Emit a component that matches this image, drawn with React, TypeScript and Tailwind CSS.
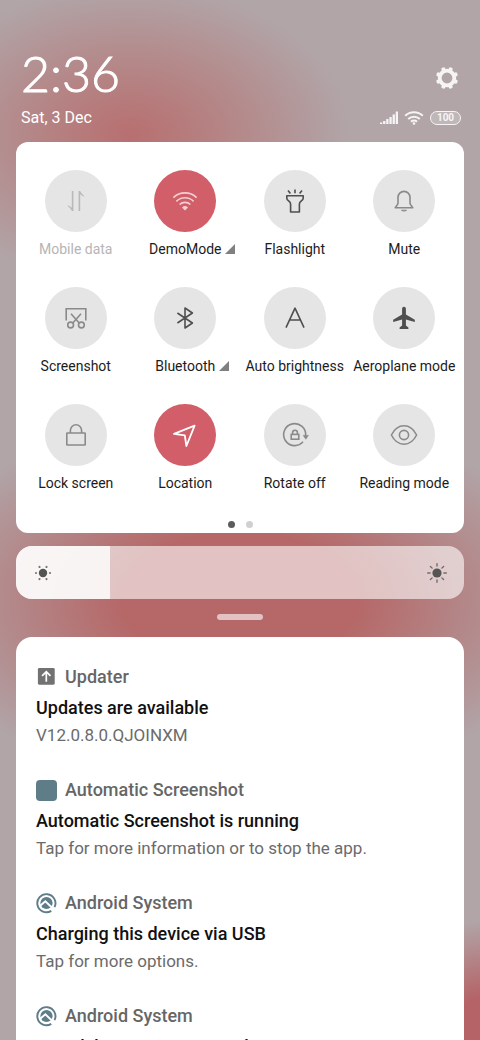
import { useState, type ReactNode } from "react";

type Tone = "faint" | "soft" | "strong" | "active";

interface Tile {
  label: string;
  tone: Tone;
  icon: ReactNode;
  expandable?: boolean;
}

interface Notice {
  app: string;
  title: string;
  body: string;
  icon: ReactNode;
}

const toneClass: Record<Tone, string> = {
  faint: "bg-[#e5e5e5] text-[#b9b9b9]",
  soft: "bg-[#e5e5e5] text-[#8a8a8a]",
  strong: "bg-[#e5e5e5] text-[#4f4f4f]",
  active: "bg-[#d15e69] text-white",
};

function Glyph({ children }: { children: ReactNode }) {
  return (
    <svg
      viewBox="0 0 28 28"
      className="size-7"
      fill="none"
      stroke="currentColor"
      strokeWidth="1.6"
      aria-hidden="true"
    >
      {children}
    </svg>
  );
}

const tiles: Tile[] = [
  {
    label: "Mobile data",
    tone: "faint",
    icon: (
      <Glyph>
        <path d="M10.600 4v20M17.400 24V4" />
        <path d="M10.600 24V21.500L6 18.600zM17.400 4v2.500l4.600 2.900z" fill="currentColor" strokeWidth="0.6" />
      </Glyph>
    ),
  },
  {
    label: "DemoMode",
    tone: "active",
    expandable: true,
    icon: (
      <Glyph>
        <g stroke="#f3cfd2" strokeWidth="1.7">
          <path d="M2.400 10.600a16.600 16.600 0 0 1 23.200 0" />
          <path d="M5.400 14.300a12.200 12.200 0 0 1 17.200 0" />
          <path d="M8.600 17.500a7.800 7.800 0 0 1 10.800 0" />
        </g>
        <path d="M11 20.400a4.400 4.400 0 0 1 6 0L14 23.400z" fill="#f3cfd2" stroke="none" />
      </Glyph>
    ),
  },
  {
    label: "Flashlight",
    tone: "strong",
    icon: (
      <Glyph>
        <path d="M5.800 8.800h16.400v2.400c0 2.600-3.800 3-3.800 5.800v8H9.600v-8c0-2.800-3.800-3.200-3.800-5.800z" strokeLinejoin="round" />
        <path d="M14 2.600v3.600M7 3.600l2.400 3M21 3.600l-2.400 3" />
      </Glyph>
    ),
  },
  {
    label: "Mute",
    tone: "soft",
    icon: (
      <Glyph>
        <path d="M8 16v-5.600a6 6 0 0 1 12 0V16c0 1.600 1.600 2.600 2.800 4.800H5.200C6.400 18.600 8 17.600 8 16z" strokeLinejoin="round" />
        <path d="M11.400 23.200c1.200 1.200 4 1.200 5.200 0z" fill="currentColor" strokeWidth="0.8" />
      </Glyph>
    ),
  },
  {
    label: "Screenshot",
    tone: "soft",
    icon: (
      <Glyph>
        <path d="M4.200 16.600V4.800h19.600v11.800" />
        <path d="M9 9.800l8.200 9.200M19 9.800L10.800 19" />
        <circle cx="8.6" cy="21" r="2.9" />
        <circle cx="19.4" cy="21" r="2.9" />
      </Glyph>
    ),
  },
  {
    label: "Bluetooth",
    tone: "strong",
    expandable: true,
    icon: (
      <Glyph>
        <path d="M6.400 9l15 10-7.400 5V4l7.400 5-15 10" strokeLinejoin="round" />
      </Glyph>
    ),
  },
  {
    label: "Auto brightness",
    tone: "strong",
    icon: (
      <Glyph>
        <path d="M5 23.600L14 4.200l9 19.400M8.600 16h10.800" strokeLinejoin="round" />
      </Glyph>
    ),
  },
  {
    label: "Aeroplane mode",
    tone: "strong",
    icon: (
      <Glyph>
        <path
          d="M14 2.800c1.100 0 1.900.9 1.900 2.200v5.600l8.900 5.200v2.300l-8.900-2.600v6l2.500 1.900v1.600h-8.800v-1.600l2.500-1.900v-6l-8.900 2.600v-2.300l8.900-5.200V5c0-1.300.8-2.200 1.900-2.200z"
          fill="currentColor"
          stroke="none"
        />
      </Glyph>
    ),
  },
  {
    label: "Lock screen",
    tone: "soft",
    icon: (
      <Glyph>
        <rect x="4.8" y="12" width="18.4" height="12" rx="0.5" />
        <path d="M8.400 12V9.400a5.600 5.600 0 0 1 11.200 0V12" />
      </Glyph>
    ),
  },
  {
    label: "Location",
    tone: "active",
    icon: (
      <Glyph>
        <path d="M3 12.800L23.600 4.600l-8.200 20.400-1.600-10.600z" strokeWidth="1.8" strokeLinejoin="round" />
      </Glyph>
    ),
  },
  {
    label: "Rotate off",
    tone: "soft",
    icon: (
      <Glyph>
        <path d="M22 20.800a11 11 0 1 1 2.600-6" />
        <path d="M22.200 14.400h5.200l-2.600 3.800z" fill="currentColor" strokeWidth="0.6" />
        <rect x="10.2" y="13.4" width="7.6" height="4.8" />
        <path d="M11.600 13.400v-1.800a2.400 2.400 0 0 1 4.800 0v1.800" />
      </Glyph>
    ),
  },
  {
    label: "Reading mode",
    tone: "soft",
    icon: (
      <Glyph>
        <path d="M1.400 14C4.400 8 8.600 4.800 14 4.800S23.600 8 26.600 14C23.600 20 19.400 23.200 14 23.200S4.400 20 1.400 14z" strokeLinejoin="round" />
        <circle cx="14" cy="14" r="4.6" />
      </Glyph>
    ),
  },
];

function SystemIcon() {
  return (
    <svg viewBox="0 0 22 22" className="size-[22px]" aria-hidden="true">
      <path d="M19.400 15.400A9.500 9.500 0 1 0 16 19.200" fill="none" stroke="#5f7c89" strokeWidth="2" />
      <circle cx="11" cy="11" r="6.4" fill="#5f7c89" />
      <path d="M4 14.200L9.800 9.200L19.600 18.600" fill="none" stroke="#fff" strokeWidth="2" />
    </svg>
  );
}

const notices: Notice[] = [
  {
    app: "Updater",
    title: "Updates are available",
    body: "V12.0.8.0.QJOINXM",
    icon: (
      <svg viewBox="0 0 22 22" className="size-[22px]" aria-hidden="true">
        <rect x="2" y="1.5" width="17.6" height="17.6" rx="1.5" fill="#727272" />
        <path d="M10.800 16V5.800M6.400 9.800l4.400-4.400 4.400 4.400" fill="none" stroke="#fff" strokeWidth="1.8" />
      </svg>
    ),
  },
  {
    app: "Automatic Screenshot",
    title: "Automatic Screenshot is running",
    body: "Tap for more information or to stop the app.",
    icon: <span className="block size-[21px] rounded-sm bg-[#5f7c89]" />,
  },
  {
    app: "Android System",
    title: "Charging this device via USB",
    body: "Tap for more options.",
    icon: <SystemIcon />,
  },
  {
    app: "Android System",
    title: "USB debugging connected",
    body: "Tap to turn off USB debugging",
    icon: <SystemIcon />,
  },
];

function GearIcon() {
  const teeth = [22.5, 67.5, 112.5, 157.5, 202.5, 247.5, 292.5, 337.5];
  return (
    <svg viewBox="0 0 24 24" className="size-6" aria-hidden="true">
      <circle cx="12" cy="12" r="7.3" fill="none" stroke="#f7f4f5" strokeWidth="3.8" />
      {teeth.map((angle) => (
        <rect
          key={angle}
          x="10"
          y="0.8"
          width="4"
          height="4.5"
          rx="1.5"
          fill="#f7f4f5"
          transform={`rotate(${angle} 12 12)`}
        />
      ))}
    </svg>
  );
}

function StatusIcons() {
  return (
    <div className="flex items-center gap-1.5 text-[#f7f4f5]">
      <svg viewBox="0 0 18 14" className="h-3.5 w-[18px]" fill="currentColor" aria-hidden="true">
        <rect x="0" y="11.5" width="2.3" height="1.5" />
        <rect x="3.1" y="10" width="2.3" height="3" />
        <rect x="6.2" y="8" width="2.3" height="5" />
        <rect x="9.4" y="6" width="2.3" height="7" />
        <rect x="12.6" y="3.4" width="2.3" height="9.6" />
        <rect x="15.7" y="0.5" width="2.3" height="12.5" />
      </svg>
      <svg viewBox="0 0 20 14" className="h-3.5 w-5" fill="none" stroke="currentColor" strokeWidth="2" aria-hidden="true">
        <path d="M1.200 4.800a12.600 12.600 0 0 1 17.600 0" />
        <path d="M4.200 8a8.400 8.400 0 0 1 11.600 0" />
        <path d="M7 10.800a4.400 4.400 0 0 1 6 0" />
        <circle cx="10" cy="12.5" r="1.3" fill="currentColor" stroke="none" />
      </svg>
      <span className="flex h-3.5 w-[31px] items-center justify-center rounded-full border border-[#f7f4f5] bg-white/20 text-[10px] leading-none font-bold">
        100
      </span>
    </div>
  );
}

function QuickTile({ tile }: { tile: Tile }) {
  return (
    <button type="button" className="flex flex-col items-center gap-[7px]">
      <span className={`flex size-[62px] items-center justify-center rounded-full ${toneClass[tile.tone]}`}>
        {tile.icon}
      </span>
      <span
        className={`relative text-sm leading-5 whitespace-nowrap ${
          tile.tone === "faint" ? "text-[#b5b5b5]" : "text-[#1c1c1c]"
        }`}
      >
        {tile.label}
        {tile.expandable && (
          <svg viewBox="0 0 10 10" className="absolute top-[5px] left-full ml-1 size-2.5" aria-hidden="true">
            <path d="M10 0v10H0z" fill="#808080" />
          </svg>
        )}
      </span>
    </button>
  );
}

function BrightnessBar() {
  const [level, setLevel] = useState(21);
  return (
    <div className="relative mt-[13px] flex h-[53px] shrink-0 items-center justify-between overflow-hidden rounded-2xl bg-white/60 px-[17px] text-[#555]">
      <div className="absolute inset-y-0 left-0 bg-white/80" style={{ width: `${level}%` }} />
      <svg viewBox="0 0 20 20" className="relative size-5" fill="currentColor" aria-hidden="true">
        <circle cx="10" cy="10" r="4.2" />
        {[0, 60, 120, 180, 240, 300].map((angle) => (
          <circle key={angle} cx="17" cy="10" r="1.1" opacity="0.8" transform={`rotate(${angle} 10 10)`} />
        ))}
      </svg>
      <svg viewBox="0 0 20 20" className="relative size-5" fill="currentColor" aria-hidden="true">
        <circle cx="10" cy="10" r="4.6" />
        {[0, 45, 90, 135, 180, 225, 270, 315].map((angle) => (
          <rect
            key={angle}
            x="16.2"
            y="9.3"
            width="3.8"
            height="1.4"
            rx="0.7"
            opacity="0.8"
            transform={`rotate(${angle} 10 10)`}
          />
        ))}
      </svg>
      <input
        type="range"
        aria-label="Brightness"
        min={0}
        max={100}
        value={level}
        onChange={(event) => setLevel(Number(event.target.value))}
        className="absolute inset-0 h-full w-full cursor-pointer opacity-0"
      />
    </div>
  );
}

export default function App() {
  return (
    <div className="flex h-screen flex-col overflow-hidden bg-[#b1a5a8] bg-[radial-gradient(ellipse_220px_150px_at_130px_135px,#b86f70_0%,#b67b7bcc_40%,#b1a5a800_100%),radial-gradient(ellipse_330px_190px_at_240px_600px,#b66767_0%,#b66767_35%,#b1a5a800_100%),radial-gradient(ellipse_80px_120px_at_100%_100%,#b56366_0%,#b56366_35%,#b1a5a800_100%)] px-4 font-[Roboto,'Noto_Sans',sans-serif]">
      <header className="flex shrink-0 items-end justify-between pt-[46px] pr-[3px] pb-3.5 pl-[5px] text-white">
        <div>
          <div className="font-[Lato,sans-serif] text-[50px] leading-[54px] font-light [-webkit-text-stroke:1px_white]">
            2:36
          </div>
          <div className="mt-2 text-base leading-5">Sat, 3 Dec</div>
        </div>
        <div className="flex flex-col items-end gap-[21px] pb-[3px]">
          <button type="button" aria-label="Settings" className="mr-0.5">
            <GearIcon />
          </button>
          <StatusIcons />
        </div>
      </header>

      <section className="shrink-0 rounded-xl bg-white px-[5px] pt-7 pb-[5px]">
        <div className="grid grid-cols-4 gap-y-7">
          {tiles.map((tile) => (
            <QuickTile key={tile.label} tile={tile} />
          ))}
        </div>
        <div className="mt-7 flex justify-center gap-[11px]">
          <span className="size-[7px] rounded-full bg-[#5c5c5c]" />
          <span className="size-[7px] rounded-full bg-[#d0d0d0]" />
        </div>
      </section>

      <BrightnessBar />

      <div className="mx-auto mt-[15px] h-1.5 w-[46px] shrink-0 rounded-full bg-white/60" />

      <main className="mt-[17px] flex grow flex-col gap-[30px] rounded-t-2xl bg-white px-5 pt-[27px]">
        {notices.map((notice) => (
          <article key={notice.title} className="shrink-0">
            <div className="flex h-[26px] items-center gap-2">
              <span className="flex w-[21px] justify-center">{notice.icon}</span>
              <span className="text-lg font-medium text-[#666]">{notice.app}</span>
            </div>
            <h2 className="mt-1.5 text-lg leading-6 font-medium text-[#111]">{notice.title}</h2>
            <p className="mt-[3px] text-[17px] leading-6 text-[#6b6b6b]">{notice.body}</p>
          </article>
        ))}
      </main>
    </div>
  );
}
